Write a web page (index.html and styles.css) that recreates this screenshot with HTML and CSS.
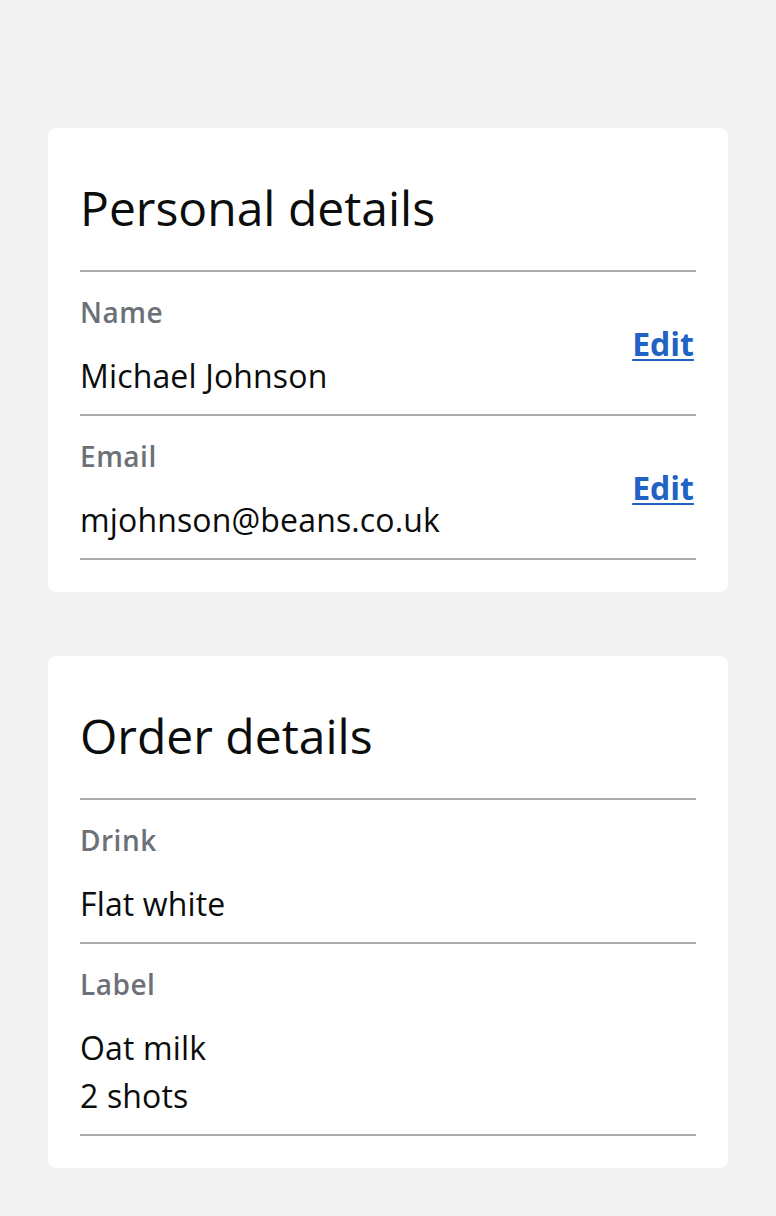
FILE: index.html
```html
<!DOCTYPE html>
<html lang="en">
<head>
<meta charset="utf-8">
<title>Details</title>
<link rel="stylesheet" href="styles.css">
</head>
<body>
<main class="page">
  <section class="card">
    <h2 class="card-title">Personal details</h2>
    <dl class="summary">
      <div class="row">
        <div class="row-text">
          <dt class="key">Name</dt>
          <dd class="value">Michael Johnson</dd>
        </div>
        <a class="edit" href="#">Edit</a>
      </div>
      <div class="row">
        <div class="row-text">
          <dt class="key">Email</dt>
          <dd class="value">mjohnson@beans.co.uk</dd>
        </div>
        <a class="edit" href="#">Edit</a>
      </div>
    </dl>
  </section>
  <section class="card">
    <h2 class="card-title">Order details</h2>
    <dl class="summary">
      <div class="row">
        <div class="row-text">
          <dt class="key">Drink</dt>
          <dd class="value">Flat white</dd>
        </div>
      </div>
      <div class="row">
        <div class="row-text">
          <dt class="key">Label</dt>
          <dd class="value">Oat milk<br>2 shots</dd>
        </div>
      </div>
    </dl>
  </section>
</main>
</body>
</html>
```
FILE: styles.css
```css
html, body {
  margin: 0;
  padding: 0;
  background: #f3f3f3;
}
body {
  font-family: "Open Sans", "Noto Sans", sans-serif;
  color: #0b0c0c;
}
.page {
  padding: 128px 48px 48px;
  display: flex;
  flex-direction: column;
  gap: 64px;
}
.card {
  background: #ffffff;
  border-radius: 8px;
  padding: 32px;
}
.card-title {
  margin: 0;
  font-size: 48px;
  font-weight: 400;
  line-height: 96px;
  padding-bottom: 14px;
  border-bottom: 2px solid #a8abaf;
}
.summary {
  margin: 0;
}
.row {
  display: flex;
  align-items: center;
  justify-content: space-between;
  padding: 16px 0 14px;
  border-bottom: 2px solid #a8abaf;
}
.key {
  margin: 0 0 16px;
  font-size: 28px;
  line-height: 48px;
  font-weight: 600;
  letter-spacing: 0.5px;
  color: #6c7178;
}
.value {
  margin: 0;
  font-size: 32px;
  line-height: 48px;
  letter-spacing: 0.15px;
  color: #0b0c0c;
}
.edit {
  font-size: 32px;
  font-weight: 700;
  color: #2163c4;
  text-decoration: underline;
  text-decoration-thickness: 2px;
  text-underline-offset: 3px;
  margin-right: 2px;
  line-height: 48px;
}
```
